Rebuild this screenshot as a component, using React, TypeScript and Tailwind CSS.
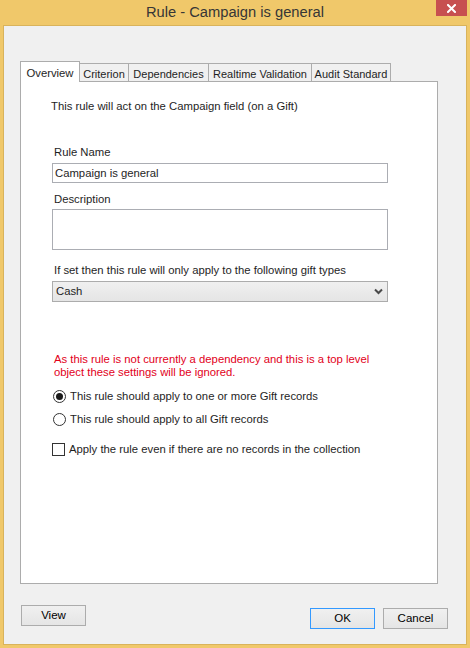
import React from 'react';

const tabs = [
  { label: 'Overview', w: 'w-[60px]' },
  { label: 'Criterion', w: 'w-[49px]' },
  { label: 'Dependencies', w: 'w-[80px]' },
  { label: 'Realtime Validation', w: 'w-[103px]' },
  { label: 'Audit Standard', w: 'w-[79px]' },
];

const WinButton: React.FC<{ children: React.ReactNode; primary?: boolean }> = ({ children, primary }) => (
  <button
    className={
      'w-[65px] h-[21px] flex items-center justify-center text-[11.5px] text-black bg-gradient-to-b from-[#f0f0f0] to-[#e5e5e5] border ' +
      (primary ? 'border-[#3399ff]' : 'border-[#acacac]')
    }
  >
    {children}
  </button>
);

const Radio: React.FC<{ checked?: boolean; label: string }> = ({ checked, label }) => (
  <label className="flex items-center h-[16px]">
    <span className="w-[13px] h-[13px] rounded-full border border-[#333333] bg-white flex items-center justify-center">
      {checked && <span className="w-[7px] h-[7px] rounded-full bg-[#1a1a1a]" />}
    </span>
    <span className="ml-[4px] whitespace-nowrap">{label}</span>
  </label>
);

export default function App() {
  return (
    <div className="w-[470px] h-[648px] bg-[#f0c86a] flex flex-col px-[3px] pb-[3px] font-['Liberation_Sans',Arial,sans-serif] text-[11.3px] text-[#1e1e1e]">
      {/* title bar */}
      <div className="relative h-[25px] flex items-center justify-center pb-[1px]">
        <span className="text-[14.7px] text-[#363636]">Rule - Campaign is general</span>
        <div className="absolute top-0 right-0 w-[31px] h-[16px] bg-[#c75050] flex items-center justify-center">
          <svg width="9" height="9" viewBox="0 0 9 9">
            <path d="M1 1 L8 8 M8 1 L1 8" stroke="white" strokeWidth="2" strokeLinecap="square" />
          </svg>
        </div>
      </div>

      {/* client area */}
      <div className="flex-1 bg-[#f0f0f0] border border-[#d9b35b] flex flex-col pl-[16px] pt-[35px]">
        <div className="flex items-end">
          {tabs.map((t, i) =>
            i === 0 ? (
              <div
                key={t.label}
                className={`${t.w} h-[21px] -mb-px relative z-10 bg-white border border-b-0 border-[#acacac] flex justify-center pt-[3px] text-[11.3px]`}
              >
                {t.label}
              </div>
            ) : (
              <div
                key={t.label}
                className={`${t.w} h-[18px] bg-[#f0f0f0] border-t border-r border-[#acacac] flex justify-center pt-[2px] text-[11px] whitespace-nowrap`}
              >
                {t.label}
              </div>
            )
          )}
        </div>

        {/* tab panel */}
        <div className="w-[418px] h-[503px] bg-white border border-[#acacac] flex flex-col pl-[31px] pt-[17px]">
          <p className="leading-[15px] ml-[-1px]">This rule will act on the Campaign field (on a Gift)</p>

          <p className="leading-[15px] mt-[31px] ml-[2px]">Rule Name</p>
          <div className="mt-[3px] w-[336px] h-[20px] border border-[#abadb3] bg-white flex items-center pl-[2px]">
            Campaign is general
          </div>

          <p className="leading-[15px] mt-[9px] ml-[2px]">Description</p>
          <div className="mt-[2px] w-[336px] h-[41px] border border-[#abadb3] bg-white" />

          <p className="leading-[15px] mt-[13px] ml-[2px]">If set then this rule will only apply to the following gift types</p>
          <div className="mt-[3px] w-[336px] h-[21px] border border-[#acacac] bg-gradient-to-b from-[#f0f0f0] to-[#e5e5e5] flex items-center justify-between pl-[3px] pr-[4px]">
            <span>Cash</span>
            <svg width="9" height="7" viewBox="0 0 9 7">
              <path d="M1 1.5 L4.5 5 L8 1.5" fill="none" stroke="#4a4a4a" strokeWidth="2" />
            </svg>
          </div>

          <p className="leading-[13px] mt-[51px] ml-[2px] text-[#e2001a] whitespace-nowrap">
            As this rule is not currently a dependency and this is a top level
            <br />
            object these settings will be ignored.
          </p>

          <div className="mt-[9px] ml-[1px] flex flex-col">
            <Radio checked label="This rule should apply to one or more Gift records" />
            <div className="mt-[7px]">
              <Radio label="This rule should apply to all Gift records" />
            </div>
          </div>

          <label className="mt-[14px] flex items-center h-[16px]">
            <span className="w-[13px] h-[13px] border border-[#333333] bg-white" />
            <span className="ml-[4px] whitespace-nowrap">Apply the rule even if there are no records in the collection</span>
          </label>
        </div>

        {/* footer buttons */}
        <div className="mt-[21px] flex items-start justify-between pr-[18px]">
          <div className="ml-[1px]">
            <WinButton>View</WinButton>
          </div>
          <div className="mt-[3px] flex gap-[8px]">
            <WinButton primary>OK</WinButton>
            <WinButton>Cancel</WinButton>
          </div>
        </div>
      </div>
    </div>
  );
}
